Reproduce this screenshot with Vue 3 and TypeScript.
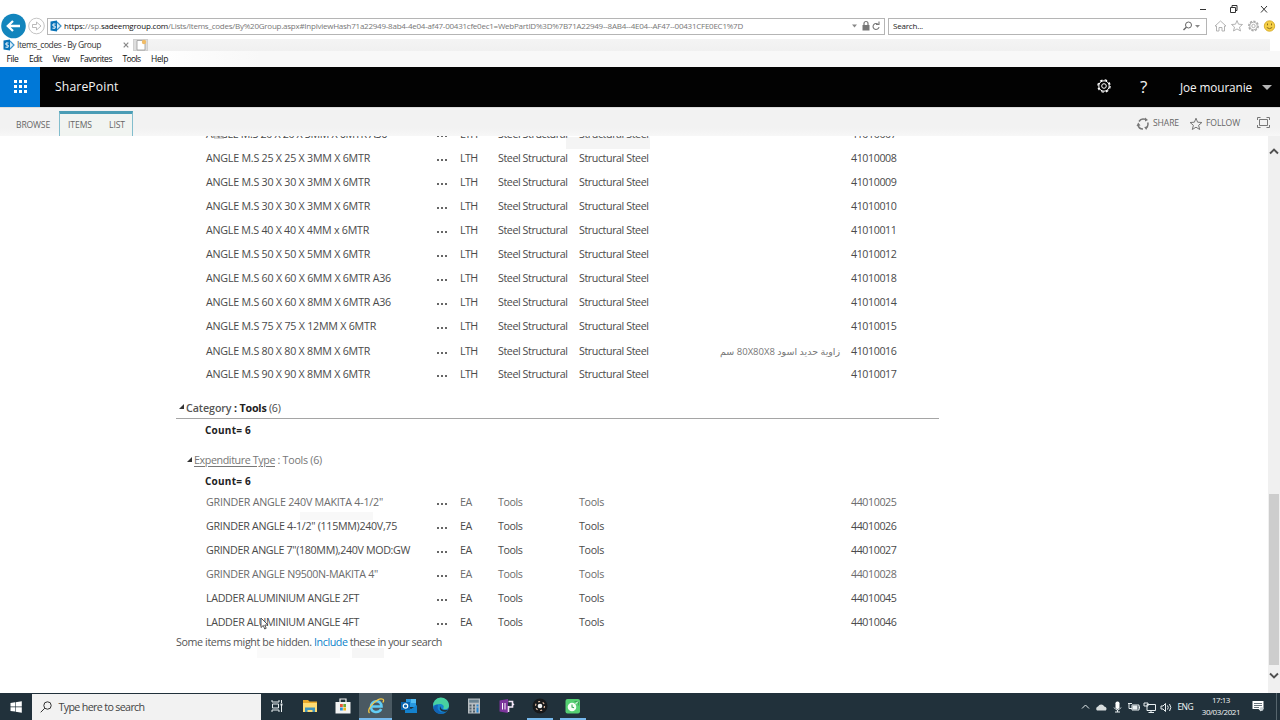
<script setup lang="ts">
interface Row {
  name: string
  width: number
  unit: string
  type: string
  group: string
  note?: string
  code: string
  worn?: boolean
}

const steel = (name: string, width: number, code: string, note?: string): Row => ({
  name, width, unit: 'LTH', type: 'Steel Structural', group: 'Structural Steel', note, code,
})
const tool = (name: string, width: number, code: string, worn = false): Row => ({
  name, width, unit: 'EA', type: 'Tools', group: 'Tools', code, worn,
})

const steelRows: Row[] = [
  steel('ANGLE M.S 20 X 20 X 3MM X 6MTR A36', 181, '41010007'),
  steel('ANGLE M.S 25 X 25 X 3MM X 6MTR', 164, '41010008'),
  steel('ANGLE M.S 30 X 30 X 3MM X 6MTR', 164, '41010009'),
  steel('ANGLE M.S 30 X 30 X 3MM X 6MTR', 164, '41010010'),
  steel('ANGLE M.S 40 X 40 X 4MM x 6MTR', 163, '41010011'),
  steel('ANGLE M.S 50 X 50 X 5MM X 6MTR', 164, '41010012'),
  steel('ANGLE M.S 60 X 60 X 6MM X 6MTR A36', 185, '41010018'),
  steel('ANGLE M.S 60 X 60 X 8MM X 6MTR A36', 185, '41010014'),
  steel('ANGLE M.S 75 X 75 X 12MM X 6MTR', 170, '41010015'),
  steel('ANGLE M.S 80 X 80 X 8MM X 6MTR', 164, '41010016', 'زاوية حديد اسود 80X80X8 سم'),
  steel('ANGLE M.S 90 X 90 X 8MM X 6MTR', 164, '41010017'),
]
const toolRows: Row[] = [
  tool('GRINDER ANGLE 240V MAKITA 4-1/2"', 177, '44010025', true),
  tool('GRINDER ANGLE 4-1/2" (115MM)240V,75', 191, '44010026'),
  tool('GRINDER ANGLE 7"(180MM),240V MOD:GW', 204, '44010027'),
  tool('GRINDER ANGLE N9500N-MAKITA 4"', 172, '44010028', true),
  tool('LADDER ALUMINIUM ANGLE 2FT', 153, '44010045'),
  tool('LADDER ALUMINIUM ANGLE 4FT', 153, '44010046'),
]
const menus: [string, number][] = [['File', 12], ['Edit', 13], ['View', 17], ['Favorites', 32], ['Tools', 18], ['Help', 17]]

/* Tracks a run of text so that it fills the given width. */
const vFit = {
  mounted(el: HTMLElement, binding: { value: number }) {
    const range = document.createRange()
    range.selectNodeContents(el)
    const natural = range.getBoundingClientRect().width
    const count = (el.textContent ?? '').length
    if (count) el.style.letterSpacing = `${(binding.value - natural) / count}px`
  },
}
</script>

<template>
  <div class="screen">
    <header class="chrome">
      <div class="caption">
        <svg viewBox="0 0 80 14" width="80" height="14" fill="none" stroke="#333" stroke-width="1">
          <path d="M8 7.500h6M38.500 5.500h5v5h-5zM40 5.500v-2h5v5h-1.500M69 4l6 6.500M75 4l-6 6.500" />
        </svg>
      </div>
      <div class="navbar">
        <svg class="nav-buttons" viewBox="0 0 47 26" width="47" height="26">
          <circle cx="13.500" cy="13" r="12.300" fill="#1385bd" />
          <path d="M20 13H8M13 8l-5.200 5 5.200 5" fill="none" stroke="#fff" stroke-width="2.300" />
          <circle cx="36.500" cy="13" r="7.800" fill="#fff" stroke="#b5b5b5" stroke-width=".8" />
          <path d="M32.500 11.500h4v-2.500l4.500 4-4.500 4v-2.500h-4z" fill="#fff" stroke="#aaa" stroke-width=".8" />
        </svg>
        <div class="address">
          <svg class="sp" viewBox="0 0 12 12" width="12" height="12">
            <path d="M7 2l4 4-4 4" fill="#d8ecf8" stroke="#3b93ca" stroke-width="1.200" />
            <path d="M.500 1.500L7 .5v11L.500 10.500z" fill="#0873b8" />
            <path d="M5.500 4H3v2h2.100v2.200H2.500" fill="none" stroke="#fff" stroke-width="1" />
          </svg>
          <span class="url"><span v-fit="37" class="dim"><b>https:</b>//sp.</span><span v-fit="67"><b>sadeemgroup.com</b></span><span v-fit="575" class="dim">/Lists/Items_codes/By%20Group.aspx#InplviewHash71a22949-8ab4-4e04-af47-00431cfe0ec1=WebPartID%3D%7B71A22949--8AB4--4E04--AF47--00431CFE0EC1%7D</span></span>
          <svg class="end" viewBox="0 0 32 12" width="32" height="12">
            <path d="M0 4.500h5L2.500 7.500z" fill="#888" />
            <path d="M10.500 5h7v5.500h-7z" fill="#777" />
            <path d="M12 5V3.500a2 2 0 0 1 4 0V5" fill="none" stroke="#777" stroke-width="1.200" />
            <path d="M26 4.200A3 3 0 1 0 27 7M27 1.500v3h-3" fill="none" stroke="#777" stroke-width="1.100" />
          </svg>
        </div>
        <div class="search">
          <span v-fit="30">Search...</span>
          <svg viewBox="0 0 20 12" width="20" height="12">
            <circle cx="5.500" cy="5" r="3" fill="none" stroke="#666" />
            <path d="M3.300 7.300L.5 10" stroke="#666" stroke-width="1.400" />
            <path d="M12 5h5l-2.500 2.800z" fill="#888" />
          </svg>
        </div>
        <svg class="tools" viewBox="0 0 64 16" width="64" height="16" fill="#fff" stroke="#aaa" stroke-width=".9">
          <path d="M2 8l5.500-5L13 8h-1.500v5H9V9.500H6V13H3.500V8z" />
          <path d="M24 2.500l1.500 3.700 4 .3-3 2.600 1 3.900-3.500-2.100-3.500 2.100 1-3.900-3-2.600 4-.3z" />
          <circle cx="40.500" cy="8" r="4.600" stroke-dasharray="2.200 1.300" stroke-width="1.700" />
          <circle cx="40.500" cy="8" r="3.800" />
          <circle cx="40.500" cy="8" r="1.700" />
          <circle cx="56.500" cy="8" r="5.200" fill="#f5cf45" stroke="#d5a928" />
          <path d="M54.500 5.500v1.800M58.500 5.500v1.800M53.800 9.500q2.700 2.400 5.400 0" fill="none" stroke="#805f14" />
        </svg>
      </div>
      <div class="tabs">
        <div class="tab">
          <svg viewBox="0 0 12 12" width="12" height="12">
            <path d="M7 2l4 4-4 4" fill="#d8ecf8" stroke="#3b93ca" stroke-width="1.200" />
            <path d="M.500 1.500L7 .5v11L.500 10.500z" fill="#0873b8" />
            <path d="M5.500 4H3v2h2.100v2.200H2.500" fill="none" stroke="#fff" stroke-width="1" />
          </svg>
          <span v-fit="84">Items_codes - By Group</span>
          <svg class="close" viewBox="0 0 6 6" width="6" height="6"><path d="M.7.700l4.600 4.600M5.300.700L.7 5.300" stroke="#888" stroke-width="1.200" /></svg>
        </div>
        <div class="newtab">
          <svg viewBox="0 0 14 14" width="14" height="14"><path d="M3 2.500h5.500L11 5.500V12H3z" fill="#fff" stroke="#999" stroke-width=".8" /><circle cx="10" cy="4" r="2.200" fill="#f0bc67" /></svg>
        </div>
      </div>
      <nav class="menus"><span v-for="[label, w] in menus" :key="label" v-fit="w">{{ label }}</span></nav>
    </header>

    <div class="suite">
      <div class="waffle"><i v-for="n in 9" :key="n" /></div>
      <span v-fit="63.500" class="brand">SharePoint</span>
      <svg class="gear" viewBox="0 0 16 16" width="16" height="16" fill="none" stroke="#fff">
        <circle cx="8" cy="8" r="6.100" stroke-width="1.300" stroke-dasharray="2.500 2.290" />
        <circle cx="8" cy="8" r="5.200" /><circle cx="8" cy="8" r="2.300" />
      </svg>
      <span class="help">?</span>
      <span v-fit="72" class="user">Joe mouranie</span>
      <i class="caret" />
    </div>

    <div class="ribbon">
      <span v-fit="34" class="browse">BROWSE</span>
      <div class="context"><span v-fit="24">ITEMS</span><span v-fit="16">LIST</span></div>
      <svg class="share" viewBox="0 0 14 14" width="14" height="14" fill="none" stroke="#777">
        <path d="M3 4.500A5 5 0 0 1 9 2.300M11.700 5.500A5 5 0 0 1 10 11M7 12A5 5 0 0 1 2 8" stroke-width="1.500" />
        <path d="M9 .500v4l3-1.500zM12 9.500l-3.800.5 2 3zM.500 9l1.700-3.500 2.300 3z" fill="#777" stroke="none" />
      </svg>
      <span v-fit="26">SHARE</span>
      <svg class="star" viewBox="0 0 14 14" width="14" height="14"><path d="M7 1.200l1.600 4 4.300.3-3.300 2.800 1.100 4.200L7 10.200l-3.700 2.300 1.100-4.200-3.300-2.800 4.300-.3z" fill="none" stroke="#777" /></svg>
      <span v-fit="34">FOLLOW</span>
      <svg class="focus" viewBox="0 0 13 13" width="13" height="13" fill="none" stroke="#777"><path d="M.500 4V1.500h3M9.500 1.500h3V4M12.500 9v2.500h-3M3.500 11.500h-3V9M2.500 3.500h8v6h-8z" /></svg>
    </div>

    <main class="content">
      <div class="page">
        <section class="rows first">
          <div v-for="(r, i) in steelRows" :key="i" class="row">
            <span><span v-fit="r.width">{{ r.name }}</span></span>
            <span class="dots"><i /><i /><i /></span>
            <span><span v-fit="17.500">{{ r.unit }}</span></span>
            <span><span v-fit="69.500">{{ r.type }}</span></span>
            <span><span v-fit="69.500">{{ r.group }}</span></span>
            <span class="note" dir="rtl">{{ r.note }}</span>
            <span><span v-fit="45.500">{{ r.code }}</span></span>
          </div>
        </section>
        <div class="category"><i class="tri" /><span v-fit="45.500" class="cat">Category</span><b v-fit="35"> : Tools</b><span v-fit="14"> (6)</span></div>
        <div class="count"><b v-fit="46">Count= 6</b></div>
        <div class="expend"><i class="tri" /><span v-fit="81" class="under">Expenditure Type</span><span v-fit="47"> : Tools (6)</span></div>
        <div class="count second"><b v-fit="46">Count= 6</b></div>
        <section class="rows">
          <div v-for="r in toolRows" :key="r.code" class="row" :class="{ worn: r.worn }">
            <span><span v-fit="r.width">{{ r.name }}</span></span>
            <span class="dots"><i /><i /><i /></span>
            <span><span v-fit="12">{{ r.unit }}</span></span>
            <span><span v-fit="24.500">{{ r.type }}</span></span>
            <span><span v-fit="25">{{ r.group }}</span></span>
            <span />
            <span><span v-fit="45.500">{{ r.code }}</span></span>
          </div>
        </section>
        <p class="hidden-note"><span v-fit="138">Some items might be hidden. </span><span v-fit="33.500" class="link">Include</span><span v-fit="94.500"> these in your search</span></p>
      </div>
      <div class="scrollbar">
        <svg viewBox="0 0 10 8" width="10" height="8"><path d="M1 6.500l4-4 4 4" fill="none" stroke="#505050" stroke-width="1.900" /></svg>
        <div class="thumb" />
        <svg viewBox="0 0 10 8" width="10" height="8"><path d="M1 1.500l4 4 4-4" fill="none" stroke="#505050" stroke-width="1.900" /></svg>
      </div>
      <i class="smudge s1" /><i class="smudge s2" /><i class="smudge s3" /><i class="smudge s4" /><i class="smudge s5" />
      <svg class="cursor" viewBox="0 0 9 13" width="9" height="13"><path d="M1 1v9.500l2.300-2 1.400 3.500 1.500-.7-1.400-3.300H8z" fill="#fff" stroke="#444" stroke-width=".9" /></svg>
    </main>

    <footer class="taskbar">
      <div class="start"><svg viewBox="0 0 12 12" width="12" height="12" fill="#fff"><path d="M.500 2L5 1.300v4.300H.500zM5.600 1.200L11.800.300v5.300H5.600zM.500 6.200H5v4.400L.500 10zM5.600 6.200h6.200v5.500l-6.200-.9z" /></svg></div>
      <div class="find">
        <svg viewBox="0 0 12 12" width="12" height="12" fill="none" stroke="#333"><circle cx="7.500" cy="4.500" r="3.700" /><path d="M4.800 7.200L.700 11.300" /></svg>
        <span v-fit="86">Type here to search</span>
      </div>
      <div class="apps">
        <div class="app"><svg viewBox="0 0 18 18" width="18" height="18" fill="none" stroke="#e8eef0"><path d="M4 3v2h7V3M4 15v-2h7v2M4.500 7h6v4h-6zM13.500 3v3M13.500 8v7" /><path d="M12.500 6.500h2v2h-2z" fill="#e8eef0" stroke="none" /></svg></div>
        <div class="app"><svg viewBox="0 0 18 18" width="18" height="18"><path d="M2 3h5l1.500 1.500H16V15H2z" fill="#e9a92b" /><path d="M2 6h14v9H2z" fill="#ffdc73" /><path d="M4 15v-4.500h10V15h-2.500v-2h-5v2z" fill="#3f94bd" /></svg></div>
        <div class="app"><svg viewBox="0 0 18 18" width="18" height="18"><path d="M6 5V2h6v3" fill="none" stroke="#f2f2f2" stroke-width="1.200" /><path d="M1.500 5h15v11.500h-15z" fill="#f3f3f3" /><path d="M6 7h2.800v3H6z" fill="#e85335" /><path d="M9.300 7H12v3H9.300z" fill="#71aa38" /><path d="M6 10.500h2.800v3H6z" fill="#2b91d8" /><path d="M9.300 10.500H12v3H9.300z" fill="#f2b51c" /></svg></div>
        <div class="app active"><svg viewBox="0 0 18 18" width="18" height="18" fill="none"><path d="M5 9.500h9.500C14.500 2 4 3 4 9.700c0 6.500 8 6.700 10.200 2.300" stroke="#62cdf5" stroke-width="2.600" /><path d="M2.500 16C-1 12 11-.500 16 2.300c1 .7.500 2.200-.2 3.200" stroke="#f2c846" stroke-width="1.300" /></svg></div>
        <div class="app"><svg viewBox="0 0 18 18" width="18" height="18"><path d="M6 2h10v8H6z" fill="#2797df" /><path d="M11 2h5v4h-5z" fill="#51bdf3" /><path d="M5 8l6 4 6-4v8H5z" fill="#1482ce" /><path d="M1 5h9v8H1z" fill="#0864ae" /><circle cx="5.500" cy="9" r="2.200" fill="none" stroke="#fff" stroke-width="1.200" /></svg></div>
        <div class="app"><svg viewBox="0 0 18 18" width="18" height="18"><circle cx="9" cy="9" r="8" fill="#1586cf" /><path d="M1 9A8 8 0 0 1 17 8c.5 4-4 5-6 3.500 2-2 0-4.500-3-4.500S2 8 1 9z" fill="#48d0a0" /><path d="M6 8c-2 5 3 9 8 7-4 3-10 2-12-2C1 9 4 7 6 8z" fill="#1263b6" /><path d="M8.500 9c-.5 3 3 5 7.500 3.500l-1 1.700C11 16 6 13 8.500 9z" fill="#21313b" /></svg></div>
        <div class="app"><svg viewBox="0 0 18 18" width="18" height="18"><path d="M3 1.500h12v15H3z" fill="#b8bec2" /><path d="M4.200 2.700h9.600v3H4.200z" fill="#6b8391" /><path d="M4.500 7.500h2v2h-2zM8 7.500h2v2H8zM4.500 10.500h2v2h-2zM8 10.500h2v2H8zM4.500 13.500h2v2h-2zM8 13.500h2v2H8z" fill="#50606b" /><path d="M11.500 7.500h2v2h-2zM11.500 10.500h2v5h-2z" fill="#2687d5" /></svg></div>
        <div class="app"><svg viewBox="0 0 18 18" width="18" height="18"><path d="M1.500 3.500L10 2v14l-8.500-1.500z" fill="#7c359b" /><path d="M4.500 6v6.500M7 6v6.500" stroke="#fff" /><path d="M10.500 15V9M10.500 10h4V4.500h-4M14.500 8l1.500-1" fill="none" stroke="#f4e7f8" stroke-width="1.600" /></svg></div>
        <div class="app running"><svg viewBox="0 0 18 18" width="18" height="18"><circle cx="9" cy="9" r="7.500" fill="#17191b" /><circle cx="9" cy="9" r="4.500" fill="none" stroke="#e0bca3" stroke-width="1.200" stroke-dasharray="2 2.700" /><circle cx="9" cy="9" r="2.300" fill="#f2f3f3" /></svg></div>
        <div class="app running"><svg viewBox="0 0 18 18" width="18" height="18"><rect x="1.500" y="2" width="14.500" height="14.500" rx="2" fill="#55cf72" /><circle cx="8" cy="10" r="4.300" fill="#f5fff6" /><path d="M8 7.500V10l2 .7M10.500 4.500h4v4" fill="none" stroke="#3ca65b" stroke-width="1.100" /><path d="M11 7.500l3-3" stroke="#fff" /></svg></div>
      </div>
      <svg class="tray" viewBox="0 0 92 14" width="92" height="14" fill="none" stroke="#e8eef0">
        <path d="M1 8.500L4.500 5 8 8.500" />
        <path d="M16 10.500a2.300 2.300 0 0 1 1-4 3.500 3.500 0 0 1 6.300 0 2.300 2.300 0 0 1 1.500 4z" fill="#d7dcdd" stroke="none" />
        <rect x="34.500" y="1.500" width="4" height="7.500" rx="1.800" fill="#fff" stroke="none" /><path d="M33 7.500q3.500 5 7 0M36.500 10v2M34 12h5" />
        <path d="M51 5h7v5h-7zM58.500 6.500v2M47 3.500h4M48 3.500v5h3" /><path d="M52 6h4v3h-4z" fill="#e8eef0" />
        <path d="M66 4.500h8.500v6H66zM70 10.500v2M67.500 12.500h5.500M63 3h4v3h-4z" />
        <path d="M80 6h2l2.500-2.500v8L82 9h-2zM86.500 5.500q1.500 2 0 4M88.500 4q2.700 3.500 0 7" />
      </svg>
      <span v-fit="15.500" class="lang">ENG</span>
      <div class="clock"><span v-fit="18">17:13</span><span v-fit="38.500">30/03/2021</span></div>
      <svg class="notice" viewBox="0 0 12 13" width="12" height="13"><path d="M.500 1h11v8H9v2.500L6.500 9h-6z" fill="#fff" /><path d="M2 3.500h8M2 5.500h8M2 7.500h5" stroke="#41515a" stroke-width=".8" /><circle cx="9.500" cy="9" r="2" fill="#c7d0d4" /></svg>
      <i class="peek" />
    </footer>
  </div>
</template>

<style>
body { margin: 0; overflow: hidden; }
</style>
<style scoped>
* { box-sizing: border-box; }
.screen { width: 1280px; height: 720px; display: flex; flex-direction: column; background: #fff; overflow: hidden; font-family: "Open Sans", "Noto Sans", sans-serif; font-size: 10.7px; color: #4a4a4a; white-space: pre; }
svg { display: block; flex: none; }
.chrome { height: 67px; flex: none; display: flex; flex-direction: column; background: #fff; border-bottom: 1px solid #c9c9c9; }
.caption { height: 13px; display: flex; justify-content: flex-end; padding: 2px 8px 0 0; }
.navbar { height: 26px; display: flex; align-items: center; }
.address { width: 838px; height: 17px; border: 1px solid #b5b5b5; display: flex; align-items: center; font-size: 8px; color: #111; padding: 0 0 0 2px; }
.url { margin-left: 2px; flex: 1; line-height: 14px; }
.url b { font-weight: 500; color: #111; }
.dim { color: #777; }
.search { width: 319px; height: 17px; margin-left: 3px; border: 1px solid #b5b5b5; display: flex; align-items: center; justify-content: space-between; padding: 0 3px 0 4px; font-size: 8px; line-height: 14px; color: #222; }
.tools { margin-left: 6px; }
.nav-buttons { position: relative; z-index: 1; }
.tabs { height: 12px; display: flex; background: linear-gradient(#f4f4f4, #f0f0f0); width: 1270px; }
.tab { width: 133px; background: #fff; display: flex; align-items: center; padding: 0 4px 0 3px; font-size: 8.5px; color: #333; gap: 2px; line-height: 12px; }
.close { margin-left: auto; }
.newtab { width: 15px; background: #dedede; border: 1px solid #d0d0d0; display: flex; align-items: center; justify-content: center; }
.menus { flex: 1; display: flex; padding-left: 1px; background: linear-gradient(90deg, #fff 0, #fff 150px, #f8f8f8 260px); font-size: 8.5px; color: #111; line-height: 16px; }
.menus span { margin-right: 5px; margin-left: 5.500px; }
.suite { height: 40px; flex: none; background: #020202; display: flex; align-items: center; color: #f4f4f4; }
.waffle { width: 40px; height: 40px; background: #0078d7; display: grid; grid-template-columns: repeat(3, 3px); grid-auto-rows: 3px; gap: 2px; place-content: center; padding-bottom: 2px; }
.waffle i { background: #fff; }
.brand { margin-left: 15px; font-size: 12.2px; width: 64px; line-height: 16px; }
.gear { margin: 0 0 2px 977px; }
.help { margin: 0 0 2px 28px; width: 9px; font-size: 17px; font-weight: 400; }
.user { margin-left: 31px; width: 73px; font-size: 11.8px; }
.caret { margin-left: 9px; border: 5px solid transparent; border-top-color: #b5b5b5; border-bottom: 0; }
.ribbon { height: 29px; flex: none; background: linear-gradient(#f2f2f2 0, #f2f2f2 70%, #f7f7f7); display: flex; align-items: flex-start; border-top: 1px solid #ddd; color: #666; font-size: 8.600px; line-height: 31px; }
.browse { margin-left: 16px; width: 43px; padding-top: 2px; }
.context { width: 74px; height: 25px; margin-top: 3px; border: 1px solid #82bdcd; border-top: 3px solid #4a9db5; border-bottom: 0; background: #f1f4f1; display: flex; gap: 17px; padding-left: 8px; line-height: 23px; }
.share { margin: 9px 3px 0 1003px; }
.star { margin: 9px 3px 0 10px; }
.focus { margin: 8px 0 0 17px; }
.content { height: 557px; flex: none; display: flex; position: relative; overflow: hidden; }
.page { flex: 1; }
.rows.first { margin-top: -14px; }
.row { height: 24px; display: grid; grid-template-columns: 230px 24px 38px 81px 141px 121px 10px 90px; align-items: center; padding-left: 206px; line-height: 24px; }
.row > :last-child { grid-column: 8; }
.row.worn { color: #6c6c6c; }
.dots { display: flex; gap: 2px; padding: 4px 0 0 1px; }
.dots i { width: 2px; height: 2px; background: #666; }
.note { font-size: 9.5px; font-family: "Open Sans", "DejaVu Sans", sans-serif; color: #777; text-align: left; padding-top: 2px; }
.category { margin-left: 176px; width: 763px; height: 24px; margin-top: 9px; border-bottom: 1px solid #a5a5a5; display: flex; line-height: 27px; padding-left: 3px; align-items: flex-start; }
.cat { font-weight: 600; color: #555; }
b { font-weight: 700; color: #222; }
.tri { border-left: 5px solid transparent; border-bottom: 5px solid #333; margin: 9px 2px 0 0; width: 0; height: 0; }
.count { height: 24px; padding-left: 205px; line-height: 24px; font-size: 10px; margin-top: -1px; }
.expend { height: 24px; margin-top: 6px; padding-left: 187px; display: flex; line-height: 25px; color: #777; }
.under { text-decoration: underline; text-underline-offset: 2px; }
.count.second { margin-top: -3px; height: 21px; }
.hidden-note { margin: -4px 0 0 176px; line-height: 24px; height: 24px; color: #555; }
.link { color: #0a7fc9; }
.scrollbar { width: 12px; height: 557px; background: #f0f0f0; display: flex; flex-direction: column; align-items: center; justify-content: space-between; padding: 11px 0 13px; }
.thumb { width: 10px; height: 171px; background: #cdcdcd; margin: auto 0 7px; }
.smudge { position: absolute; background: #aaa; opacity: .13; }
.s1 { left: 566px; top: 1px; width: 84px; height: 12px; }
.s2 { left: 300px; top: 376px; width: 73px; height: 8px; opacity: .08; }
.s3 { left: 257px; top: 510px; width: 83px; height: 12px; opacity: .06; }
.s4 { left: 352px; top: 512px; width: 32px; height: 10px; opacity: .1; }
.s5 { left: 214px; top: 0; width: 10px; height: 3px; opacity: .5; }
.cursor { position: absolute; left: 260px; top: 481px; }
.taskbar { height: 27px; flex: none; background: #21313b; color: #f2f5f6; display: flex; align-items: center; }
.start { width: 32px; display: flex; justify-content: center; }
.find { width: 229px; height: 26px; background: #f2f2f2; color: #444; display: flex; align-items: center; gap: 7px; padding-left: 7.500px; }
.apps { display: flex; height: 27px; }
.app { width: 32.800px; display: flex; align-items: center; justify-content: center; border-bottom: 2px solid transparent; }
.app.active { background: #4a5962; border-color: #76b9ed; }
.app.running { background: linear-gradient(#76b9ed, #76b9ed) center 25px / 26px 2px no-repeat border-box; }
.tray { margin-left: 492.500px; }
.lang { margin-left: 4px; width: 16px; font-size: 8.5px; }
.clock { width: 55px; display: flex; flex-direction: column; align-items: center; font-size: 8px; line-height: 12px; padding-bottom: 1px; }
.notice { margin-left: 4px; }
.peek { width: 1px; height: 27px; background: #56656d; margin-left: 12px; }
</style>
